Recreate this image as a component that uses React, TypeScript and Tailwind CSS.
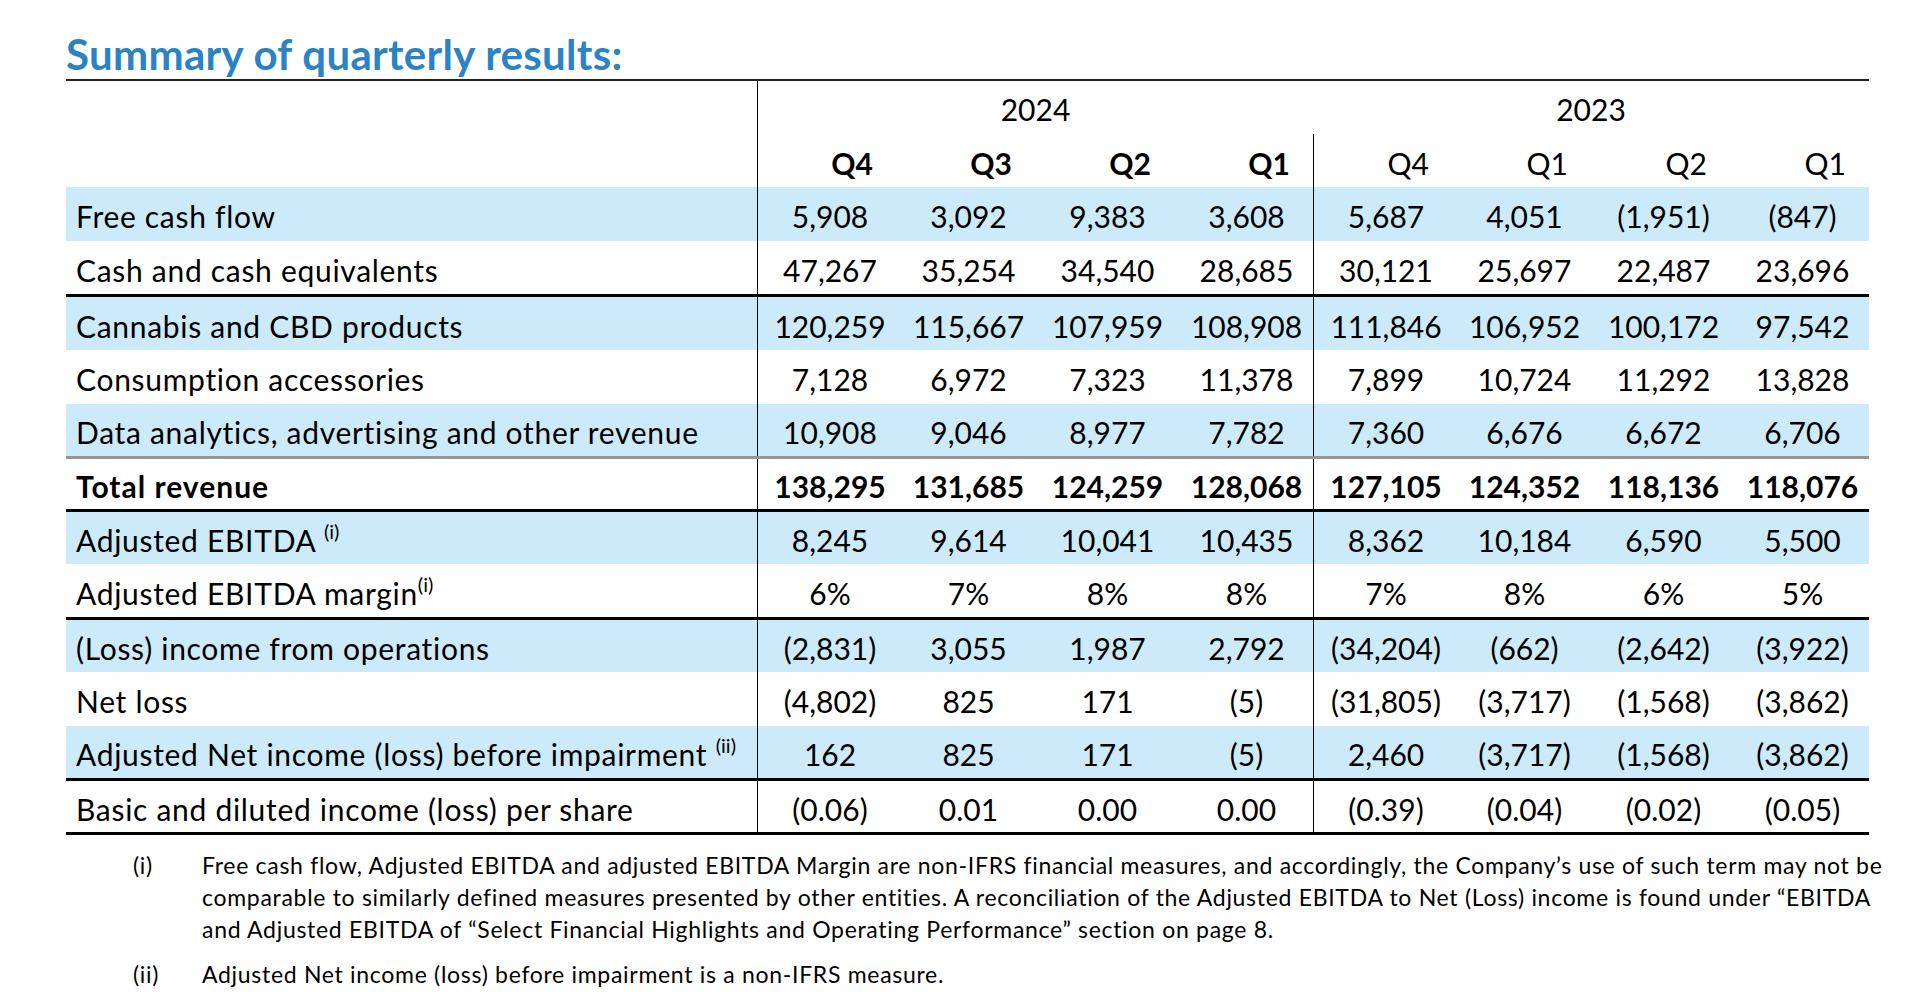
import React from "react";

type Row = {
  label: string;
  sup?: string;
  supSpace?: boolean;
  values: string[];
  rowClass: string;
  bold?: boolean;
};

const rows: Row[] = [
  {
    label: "Free cash flow",
    values: ["5,908", "3,092", "9,383", "3,608", "5,687", "4,051", "(1,951)", "(847)"],
    rowClass: "h-[54px] bg-[#cdeafa]",
  },
  {
    label: "Cash and cash equivalents",
    values: ["47,267", "35,254", "34,540", "28,685", "30,121", "25,697", "22,487", "23,696"],
    rowClass: "h-[56px] border-b-[3px] border-black",
  },
  {
    label: "Cannabis and CBD products",
    values: ["120,259", "115,667", "107,959", "108,908", "111,846", "106,952", "100,172", "97,542"],
    rowClass: "h-[53px] bg-[#cdeafa]",
  },
  {
    label: "Consumption accessories",
    values: ["7,128", "6,972", "7,323", "11,378", "7,899", "10,724", "11,292", "13,828"],
    rowClass: "h-[54px]",
  },
  {
    label: "Data analytics, advertising and other revenue",
    values: ["10,908", "9,046", "8,977", "7,782", "7,360", "6,676", "6,672", "6,706"],
    rowClass: "h-[55px] bg-[#cdeafa] border-b-[3px] border-[#969696]",
  },
  {
    label: "Total revenue",
    values: ["138,295", "131,685", "124,259", "128,068", "127,105", "124,352", "118,136", "118,076"],
    rowClass: "h-[53px] border-b-[3px] border-black",
    bold: true,
  },
  {
    label: "Adjusted EBITDA",
    sup: "(i)",
    supSpace: true,
    values: ["8,245", "9,614", "10,041", "10,435", "8,362", "10,184", "6,590", "5,500"],
    rowClass: "h-[52px] bg-[#cdeafa]",
  },
  {
    label: "Adjusted EBITDA margin",
    sup: "(i)",
    values: ["6%", "7%", "8%", "8%", "7%", "8%", "6%", "5%"],
    rowClass: "h-[56px] border-b-[3px] border-black",
  },
  {
    label: "(Loss) income from operations",
    values: ["(2,831)", "3,055", "1,987", "2,792", "(34,204)", "(662)", "(2,642)", "(3,922)"],
    rowClass: "h-[52px] bg-[#cdeafa]",
  },
  {
    label: "Net loss",
    values: ["(4,802)", "825", "171", "(5)", "(31,805)", "(3,717)", "(1,568)", "(3,862)"],
    rowClass: "h-[54px]",
  },
  {
    label: "Adjusted Net income (loss) before impairment",
    sup: "(ii)",
    supSpace: true,
    values: ["162", "825", "171", "(5)", "2,460", "(3,717)", "(1,568)", "(3,862)"],
    rowClass: "h-[55px] bg-[#cdeafa] border-b-[3px] border-black",
  },
  {
    label: "Basic and diluted income (loss) per share",
    values: ["(0.06)", "0.01", "0.00", "0.00", "(0.39)", "(0.04)", "(0.02)", "(0.05)"],
    rowClass: "h-[54px] border-b-[3px] border-black",
  },
];

const quarters = [
  { q: "Q4", bold: true },
  { q: "Q3", bold: true },
  { q: "Q2", bold: true },
  { q: "Q1", bold: true },
  { q: "Q4", bold: false },
  { q: "Q1", bold: false },
  { q: "Q2", bold: false },
  { q: "Q1", bold: false },
];

export default function App() {
  return (
    <div className="w-[1918px] h-[1000px] bg-white text-black font-['Lato',sans-serif] pl-[66px] overflow-hidden">
      <h1 className="pt-[34px] h-[79px] text-[42px] leading-[40px] font-bold text-[#2b83c3] tracking-[0.3px]">
        Summary of quarterly results:
      </h1>

      <div className="w-[1803px] border-t-2 border-[#222] text-[30px] leading-none">
        {/* Year row */}
        <div className="grid grid-cols-[691px_repeat(8,139px)] h-[53px]">
          <div />
          <div className="col-span-4 flex items-center justify-center pt-[2px] border-l border-black">
            2024
          </div>
          <div className="col-span-4 flex items-center justify-center pt-[2px]">2023</div>
        </div>

        {/* Quarter row */}
        <div className="grid grid-cols-[691px_repeat(8,139px)] h-[53px]">
          <div />
          {quarters.map((q, i) => (
            <div
              key={i}
              className={
                "flex items-center justify-end pr-[23px] pt-[5px] " +
                (q.bold ? "font-bold " : "") +
                (i === 0 || i === 4 ? "border-l border-black" : "")
              }
            >
              {q.q}
            </div>
          ))}
        </div>

        {rows.map((r, ri) => (
          <div
            key={ri}
            className={"grid grid-cols-[691px_repeat(8,139px)] " + r.rowClass + (r.bold ? " font-bold" : "")}
          >
            <div className="flex items-center pl-[10px] pt-[4px] whitespace-nowrap">
              <span className={r.bold ? "tracking-[1px]" : "tracking-[0.7px]"}>
                {r.label}
                {r.sup ? (
                  <>
                    {r.supSpace ? " " : ""}
                    <sup className="text-[20px] top-[-13px] leading-none tracking-normal">{r.sup}</sup>
                  </>
                ) : null}
              </span>
            </div>
            {r.values.map((v, vi) => (
              <div
                key={vi}
                className={
                  "flex items-center justify-center pl-[6px] pt-[4px] whitespace-nowrap " +
                  (vi === 0 || vi === 4 ? "border-l border-black" : "")
                }
              >
                {v}
              </div>
            ))}
          </div>
        ))}
      </div>

      <div className="pl-[67px] pt-[14px] text-[23px] leading-[32px] tracking-[0.7px]">
        <div className="grid grid-cols-[69px_1fr]">
          <div>(i)</div>
          <div className="whitespace-nowrap">
            Free cash flow, Adjusted EBITDA and adjusted EBITDA Margin are non-IFRS financial measures, and accordingly, the Company’s use of such term may not be
            <br />
            comparable to similarly defined measures presented by other entities. A reconciliation of the Adjusted EBITDA to Net (Loss) income is found under “EBITDA
            <br />
            and Adjusted EBITDA of “Select Financial Highlights and Operating Performance” section on page 8.
          </div>
        </div>
        <div className="grid grid-cols-[69px_1fr] mt-[13px]">
          <div>(ii)</div>
          <div className="whitespace-nowrap">Adjusted Net income (loss) before impairment is a non-IFRS measure.</div>
        </div>
      </div>
    </div>
  );
}
